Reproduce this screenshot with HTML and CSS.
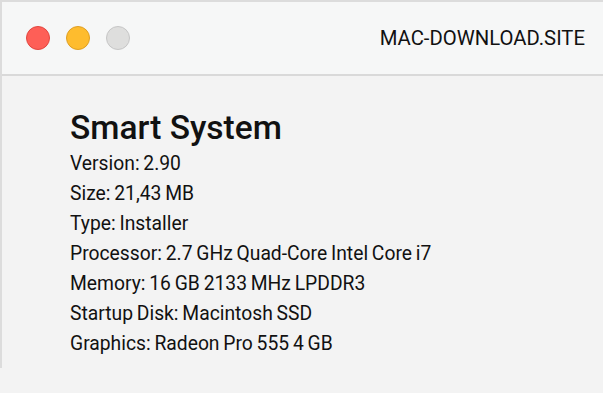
FILE: index.html
```html
<!DOCTYPE html>
<html>
<head>
<meta charset="utf-8">
<link rel="stylesheet" href="styles.css">
</head>
<body>
<div class="window">
  <div class="titlebar">
    <div class="lights">
      <span class="light red"></span>
      <span class="light yellow"></span>
      <span class="light gray"></span>
    </div>
    <div class="site">MAC-DOWNLOAD.SITE</div>
  </div>
  <div class="content">
    <h1 class="title">Smart System</h1>
    <ul class="specs">
      <li>Version: 2.90</li>
      <li>Size: 21,43 MB</li>
      <li>Type: Installer</li>
      <li>Processor: 2.7 GHz Quad-Core Intel Core i7</li>
      <li>Memory: 16 GB 2133 MHz LPDDR3</li>
      <li>Startup Disk: Macintosh SSD</li>
      <li>Graphics: Radeon Pro 555 4 GB</li>
    </ul>
  </div>
</div>
</body>
</html>
```
FILE: styles.css
```css
html, body {
  margin: 0;
  padding: 0;
  background: #f3f3f3;
  font-family: Roboto, "Liberation Sans", sans-serif;
  color: #111;
}
.window {
  border-top: 2px solid #dcdcdc;
  border-left: 2px solid #dcdcdc;
  height: 368px;
  box-sizing: border-box;
}
.titlebar {
  height: 74px;
  box-sizing: border-box;
  background: #f6f7f7;
  border-bottom: 2px solid #d9d9d9;
  display: flex;
  align-items: center;
  justify-content: space-between;
  padding: 0 18px 0 24px;
}
.lights {
  display: flex;
  gap: 16px;
}
.light {
  width: 24px;
  height: 24px;
  border-radius: 50%;
  box-sizing: border-box;
  display: block;
}
.red { background: #fe5f57; border: 1px solid #e2463f; }
.yellow { background: #febc2e; border: 1px solid #df9f23; }
.gray { background: #dededd; border: 1px solid #c6c6c6; }
.site {
  font-size: 20.3px;
  color: #111;
}
.content {
  padding: 32px 0 0 68px;
}
.title {
  margin: 0;
  font-size: 33.5px;
  font-weight: 500;
  line-height: 40px;
}
.specs {
  list-style: none;
  margin: 1px 0 0;
  padding: 0;
  font-size: 19.3px;
  line-height: 30px;
  word-spacing: -1px;
}
```
